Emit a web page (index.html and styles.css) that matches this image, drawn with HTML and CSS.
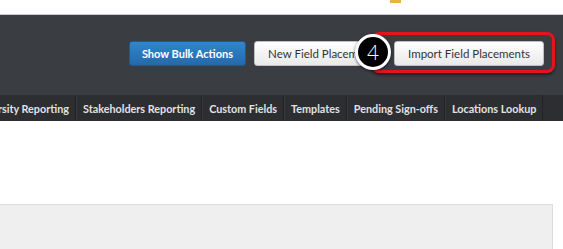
FILE: index.html
```html
<!DOCTYPE html>
<html lang="en">
<head>
    <meta charset="UTF-8">
    <meta name="viewport" content="width=device-width, initial-scale=1.0">
    <title>Field Placements</title>
    <link rel="stylesheet" href="styles.css">
</head>
<body>
    <div class="pagina">
        <div class="barra-superior">
            <span class="marca"></span>
        </div>

        <div class="encabezado">
            <div class="acciones">
                <button class="btn btn-azul">Show Bulk Actions</button>
                <button class="btn btn-blanco btn-nuevo">New Field Placement</button>
                <button class="btn btn-blanco">Import Field Placements</button>
            </div>
            <!-- anotaciones del tutorial, por encima de los botones -->
            <div class="resalte"></div>
            <div class="paso">4</div>
        </div>

        <div class="menu">
            <a class="menu-item menu-primero">University Reporting</a>
            <a class="menu-item">Stakeholders Reporting</a>
            <a class="menu-item">Custom Fields</a>
            <a class="menu-item">Templates</a>
            <a class="menu-item">Pending Sign-offs</a>
            <a class="menu-item">Locations Lookup</a>
        </div>

        <div class="contenido">
            <div class="panel"></div>
        </div>
    </div>
</body>
</html>
```

FILE: styles.css
```css
body {
    margin: 0;
    font-family: 'Lato', 'Open Sans', sans-serif;
    background-color: white;
}

.pagina {
    width: 563px;
    height: 249px;
    overflow: hidden;
    display: flex;
    flex-direction: column;
}

.barra-superior {
    height: 14px;
    border-bottom: 1px solid #c9cacc;
    padding-left: 390px;
}

.marca {
    display: block;
    width: 11px;
    height: 3px;
    background-color: #e8b53c;
}

.encabezado {
    height: 80px;
    background-color: #3a3d42;
    position: relative;
    display: flex;
    justify-content: flex-end;
    align-items: center;
    padding-right: 19px;
}

.acciones {
    display: flex;
    gap: 8px;
    margin-top: -4px;
}

.btn {
    height: 25px;
    padding: 0 13px;
    font-family: inherit;
    font-size: 11.5px;
    border-radius: 3px;
    cursor: pointer;
}

.btn-azul {
    background: linear-gradient(#3186cc, #2469ab);
    border: 1px solid #1d5a92;
    color: white;
    font-weight: bold;
    font-size: 11px;
    padding: 0 12px;
}

.btn-blanco {
    background: linear-gradient(#ffffff, #e9e9e9);
    border: 1px solid #bfc0c2;
    color: #333;
}

.btn-nuevo {
    width: 132px;
    overflow: hidden;
    white-space: nowrap;
    text-align: left;
}

.resalte {
    position: absolute;
    left: 371px;
    top: 17px;
    width: 178px;
    height: 35px;
    border: 3px solid #e3141b;
    border-radius: 8px;
    box-shadow: 0 2px 3px rgba(0, 0, 0, 0.5);
}

.paso {
    position: absolute;
    left: 355px;
    top: 19px;
    width: 30px;
    height: 30px;
    border: 3px solid white;
    border-radius: 50%;
    background-color: black;
    color: white;
    font-size: 21px;
    font-weight: 300;
    line-height: 30px;
    text-align: center;
    box-shadow: 0 1px 3px rgba(0, 0, 0, 0.6);
}

.menu {
    height: 26px;
    background-color: #2c2e32;
    display: flex;
    align-items: stretch;
    margin-left: -37px;
}

.menu-item {
    display: flex;
    align-items: center;
    padding: 0 6px;
    color: #e2e2e2;
    font-size: 10.8px;
    font-weight: bold;
    white-space: nowrap;
    border-right: 1px solid #222326;
    border-left: 1px solid #383a3f;
}

.contenido {
    flex: 1;
    padding-top: 83px;
}

.panel {
    width: 552px;
    height: 100%;
    background-color: #efefef;
    border-top: 1px solid #dcdcdc;
    border-right: 1px solid #dcdcdc;
}
```
